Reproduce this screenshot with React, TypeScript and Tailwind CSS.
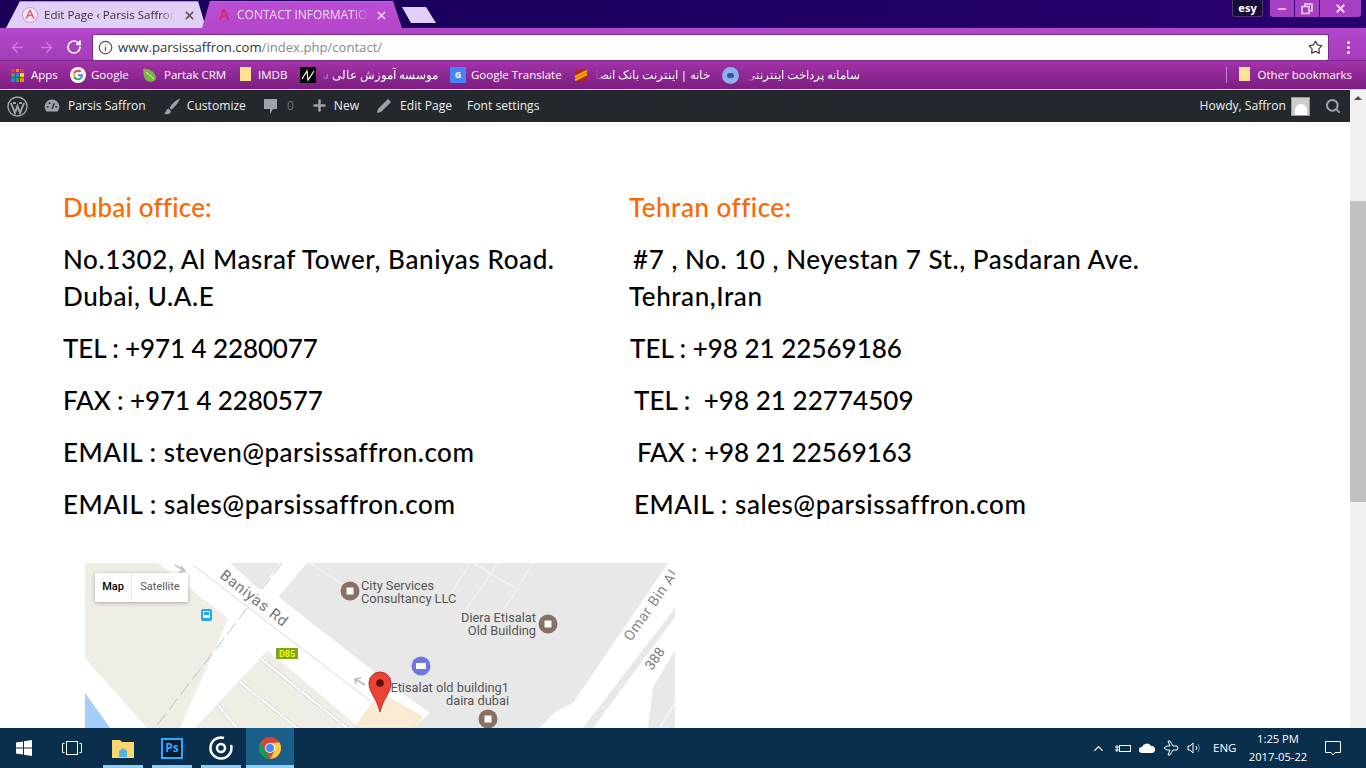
import React from "react";
import {
  ArrowLeft,
  ArrowRight,
  RotateCw,
  Info,
  Star,
  Plus,
  X,
  Minus,
  Search,
  ChevronUp,
} from "lucide-react";

const uiFont = "font-['Open_Sans',sans-serif]";

const BookmarkFolder = () => (
  <span className="w-[11px] h-[14px] bg-[#fde293] inline-block shrink-0" />
);

const Fav = () => (
  <svg width="16" height="16" viewBox="0 0 16 16">
    <circle cx="8" cy="8" r="7.5" fill="#f3e6f5" stroke="#cf9ac8" />
    <path d="M8 3 L4 12 M8 3 L12 12 M5 9 L11 8" stroke="#d5607a" strokeWidth="1.4" fill="none" />
  </svg>
);

const TabBar = () => (
  <div className="h-[28px] flex bg-gradient-to-r from-[#1c0058] via-[#1c0062] to-[#2a0070] shrink-0">
    <div className="mt-px ml-[6px] w-[200px] h-[27px] bg-[#e0d0f8] border-t border-[#a89ab8] [clip-path:polygon(14px_0,192px_0,200px_100%,0_100%)] flex items-center pl-[16px] gap-[6px] text-[11.5px] text-[#333] font-['Open_Sans',sans-serif]">
      <Fav />
      <span className="w-[130px] overflow-hidden whitespace-nowrap [mask-image:linear-gradient(to_right,black_90%,transparent)]">Edit Page ‹ Parsis Saffron</span>
      <X size={13} strokeWidth={3} className="text-[#555] ml-[3px]" />
    </div>
    <div className="mt-px -ml-[4px] w-[200px] h-[27px] bg-gradient-to-b from-[#b94fd6] to-[#b645c9] border-t border-[#9a80a8] [clip-path:polygon(8px_0,191px_0,200px_100%,0_100%)] flex items-center pl-[14px] gap-[5px] text-[12px] text-[#f4dcf8] font-['Open_Sans',sans-serif]">
      <svg width="16" height="16" viewBox="0 0 16 16">
        <path d="M8 2 L3.5 13 M8 2 L12.5 13 M4 10 L12 8" stroke="#e0245e" strokeWidth="1.8" fill="none" />
      </svg>
      <span className="w-[132px] overflow-hidden whitespace-nowrap [mask-image:linear-gradient(to_right,black_88%,transparent)]">CONTACT INFORMATION</span>
      <X size={13} strokeWidth={3} className="text-[#ecd0f2] ml-[1px]" />
    </div>
    <div className="mt-[7px] w-[34px] h-[16px] bg-[#e0d0f8] [clip-path:polygon(0_0,24px_0,34px_100%,9px_100%)]" />
    <div className="ml-auto flex h-[18px] items-start">
      <div className="w-[31px] h-[17px] mr-[7px] bg-[#180c3c] border border-[#4a3a6a] border-t-0 rounded-b-[3px] text-white text-[11px] font-bold flex items-center justify-center">
        esy
      </div>
      <div className="w-[24px] h-[17px] bg-[#a83ec4] rounded-bl-[3px] flex items-center justify-center mr-[1px]">
        <Minus size={12} strokeWidth={3} className="text-[#ecd8f2]" />
      </div>
      <div className="w-[24px] h-[17px] bg-[#a83ec4] flex items-center justify-center mr-[1px]">
        <svg width="12" height="12" viewBox="0 0 12 12" fill="none" stroke="#ecd8f2" strokeWidth="1.5">
          <rect x="1" y="3.5" width="7" height="7" />
          <path d="M4 3.5 V1 H11 V8 H8" />
        </svg>
      </div>
      <div className="w-[41px] h-[17px] mr-[5px] bg-[#a83ec4] rounded-br-[3px] flex items-center justify-center">
        <X size={13} strokeWidth={3.5} className="text-[#ecd8f2]" />
      </div>
    </div>
  </div>
);

const Toolbar = () => (
  <div className="h-[32px] pt-[6px] flex items-center shrink-0 bg-gradient-to-b from-[#b348cc] to-[#a63cb9]">
    <ArrowLeft size={17} strokeWidth={2} className="ml-[9px] text-[#c77cd8]" />
    <ArrowRight size={17} strokeWidth={2} className="ml-[12px] text-[#c77cd8]" />
    <RotateCw size={16} strokeWidth={2.6} className="ml-[11px] text-white" />
    <div className="ml-[10px] w-[1237px] h-[26px] bg-white rounded-[2px] border border-[#7a2a8a] border-b-0 flex items-center">
      <Info size={15} strokeWidth={2} className="ml-[5px] text-[#555]" />
      <span className={`ml-[5px] text-[13.1px] ${uiFont}`}>
        <span className="text-[#333]">www.parsissaffron.com</span>
        <span className="text-[#888]">/index.php/contact/</span>
      </span>
      <Star size={15} strokeWidth={2} className="ml-auto mr-[5px] text-[#444]" />
    </div>
    <div className="ml-[18px] flex flex-col gap-[2px]">
      <span className="w-[3px] h-[3px] bg-white rounded-full" />
      <span className="w-[3px] h-[3px] bg-white rounded-full" />
      <span className="w-[3px] h-[3px] bg-white rounded-full" />
    </div>
  </div>
);

const AppsIcon = () => (
  <span className="grid grid-cols-3 gap-[1px] w-[13px] h-[13px]">
    {["#e53935", "#fb8c00", "#e53935", "#43a047", "#1e88e5", "#fdd835", "#1e88e5", "#43a047", "#fb8c00"].map((c, i) => (
      <span key={i} style={{ backgroundColor: c }} />
    ))}
  </span>
);

const GoogleIcon = () => (
  <svg width="16" height="16" viewBox="0 0 48 48">
    <circle cx="24" cy="24" r="24" fill="#fff" />
    <path d="M39 25c0-1.3-.1-2.3-.3-3.3H24v6h8.5c-.4 2-1.5 3.6-3.2 4.7l5 3.9C37.3 33.5 39 29.7 39 25z" fill="#4285f4" />
    <path d="M24 40c4.2 0 7.7-1.4 10.3-3.7l-5-3.9c-1.4.9-3.2 1.5-5.3 1.5-4 0-7.5-2.7-8.7-6.4l-5.2 4C12.7 36.6 17.9 40 24 40z" fill="#34a853" />
    <path d="M15.3 27.5c-.7-2-.7-4.9 0-7l-5.2-4c-2.1 4.3-2.1 10.7 0 15z" fill="#fbbc05" />
    <path d="M24 14c2.3 0 4.3.8 5.9 2.3l4.4-4.4C31.7 9.4 28.2 8 24 8c-6.1 0-11.3 3.4-13.9 8.500l5.200 4C16.500 16.700 20 14 24 14z" fill="#ea4335" />
  </svg>
);

const BookmarkLabel = ({ children, className = "" }: { children: React.ReactNode; className?: string }) => (
  <span className={`text-[11.5px] text-white whitespace-nowrap shrink-0 ${className}`}>{children}</span>
);

const PersianLabel = ({ children, className = "" }: { children: React.ReactNode; className?: string }) => (
  <span
    dir="rtl"
    className={`text-[11.5px] text-white whitespace-nowrap shrink-0 overflow-hidden font-['Noto_Sans',sans-serif] [mask-image:linear-gradient(to_left,black_90%,transparent)] ${className}`}
  >
    {children}
  </span>
);

const BookmarksBar = () => (
  <div className={`h-[30px] flex items-center shrink-0 bg-gradient-to-b from-[#a334aa] to-[#7c1c80] border-t border-t-[#7d2a8e] border-b border-b-[#d8d0dc] ${uiFont}`}>
    <span className="ml-[11px]"><AppsIcon /></span>
    <BookmarkLabel className="ml-[7px] w-[27px]">Apps</BookmarkLabel>
    <span className="ml-[12px]"><GoogleIcon /></span>
    <BookmarkLabel className="ml-[5px] w-[39px]">Google</BookmarkLabel>
    <svg className="ml-[12px]" width="15" height="16" viewBox="0 0 15 16">
      <path d="M1 2 C8 1 14 6 14 12 C12 16 4 16 2 10 Z" fill="#7cb342" />
      <path d="M4 5 L12 12" stroke="#dcedc8" />
    </svg>
    <BookmarkLabel className="ml-[7px] w-[60px]">Partak CRM</BookmarkLabel>
    <span className="ml-[16px]"><BookmarkFolder /></span>
    <BookmarkLabel className="ml-[7px] w-[29px]">IMDB</BookmarkLabel>
    <span className="ml-[13px] w-[16px] h-[16px] bg-black flex items-center justify-center shrink-0">
      <svg width="14" height="14" viewBox="0 0 14 14" fill="none" stroke="#fff" strokeWidth="1.2">
        <path d="M1 11 L6 3 L7 12 L13 3" />
      </svg>
    </span>
    <PersianLabel className="ml-[6px] w-[116px]">موسسه آموزش عالی س</PersianLabel>
    <span className="ml-[12px] w-[16px] h-[16px] bg-[#4285f4] text-white text-[9px] font-bold flex items-center justify-center rounded-[1px] shrink-0">G</span>
    <BookmarkLabel className="ml-[5px] w-[89px]">Google Translate</BookmarkLabel>
    <svg className="ml-[14px]" width="14" height="14" viewBox="0 0 14 14">
      <rect x="1" y="1" width="12" height="12" rx="3" fill="#b5271f" />
      <path d="M1 9 L13 3 M1 12 L13 6" stroke="#f5b301" strokeWidth="2" />
    </svg>
    <PersianLabel className="ml-[7px] w-[115px]">خانه | اینترنت بانک انصا</PersianLabel>
    <span className="ml-[12px] w-[17px] h-[17px] rounded-full bg-[#8fb0e8] flex items-center justify-center shrink-0">
      <span className="w-[7px] h-[5px] rounded-full bg-[#3355aa]" />
    </span>
    <PersianLabel className="ml-[8px] w-[113px]">سامانه پرداخت اینترنتی</PersianLabel>
    <span className="ml-auto h-[16px] w-px bg-[#c27ccc]" />
    <span className="ml-[12px]"><BookmarkFolder /></span>
    <BookmarkLabel className="ml-[8px] mr-[14px]">Other bookmarks</BookmarkLabel>
  </div>
);

const WpItem = ({ icon, children, className = "" }: { icon?: React.ReactNode; children: React.ReactNode; className?: string }) => (
  <div className={`flex items-center ${className}`}>
    {icon}
    <span className="text-[12.1px] text-[#eeeeee] whitespace-nowrap">{children}</span>
  </div>
);

const AdminBar = () => (
  <div className={`h-[32px] bg-[#23282d] flex items-center shrink-0 pr-[9px] ${uiFont}`}>
    <svg className="ml-[7px]" width="21" height="21" viewBox="0 0 21 21" fill="none">
      <circle cx="10.5" cy="10.5" r="9.5" stroke="#9ea3a8" strokeWidth="1.5" />
      <path d="M4 7 L8 17 L10.5 10 L13 17 L17 7 M6 7 H9 M12 7 H15" stroke="#9ea3a8" strokeWidth="2" />
    </svg>
    <WpItem
      className="ml-[16px]"
      icon={
        <svg className="mr-[8px]" width="16" height="15" viewBox="0 0 17 15">
          <path d="M8.5 1 A8 8 0 0 0 2.5 14 H14.5 A8 8 0 0 0 8.5 1 Z" fill="#9ea3a8" />
          <path d="M8.5 11 L11 5" stroke="#23282d" strokeWidth="1.5" />
          <circle cx="4" cy="9" r="1" fill="#23282d" />
          <circle cx="6" cy="5" r="1" fill="#23282d" />
          <circle cx="13" cy="9" r="1" fill="#23282d" />
        </svg>
      }
    >
      Parsis Saffron
    </WpItem>
    <WpItem
      className="ml-[17px]"
      icon={
        <svg className="mr-[6px]" width="18" height="19" viewBox="0 0 19 19">
          <path d="M18 1 C13 3 9 7 7 11 L9 13 C12 10 16 6 18 1 Z M6 12 C3 12 4 16 1 17 C5 19 9 17 8 14 Z" fill="#9ea3a8" />
        </svg>
      }
    >
      Customize
    </WpItem>
    <svg className="ml-[17px]" width="15" height="17" viewBox="0 0 15 17">
      <path d="M1 1 H14 V11 H10 L7 16 V11 H1 Z" fill="#9ea3a8" />
    </svg>
    <span className="ml-[9px] text-[12.1px] text-[#777]">0</span>
    <WpItem className="ml-[17px]" icon={<Plus size={17} strokeWidth={3.5} className="mr-[6px] text-[#9ea3a8]" />}>
      New
    </WpItem>
    <WpItem
      className="ml-[17px]"
      icon={
        <svg className="mr-[8px]" width="16" height="16" viewBox="0 0 16 16">
          <path d="M12 1 L15 4 L5 14 L1 15 L2 11 Z" fill="#9ea3a8" />
        </svg>
      }
    >
      Edit Page
    </WpItem>
    <WpItem className="ml-[15px]">Font settings</WpItem>
    <WpItem className="ml-auto">Howdy, Saffron</WpItem>
    <span className="ml-[5px] w-[19px] h-[19px] bg-[#ccc] border border-[#999] flex items-end justify-center overflow-hidden">
      <span className="w-[12px] h-[11px] bg-white rounded-t-full" />
    </span>
    <Search size={16} strokeWidth={3} className="ml-[15px] text-[#9ea3a8]" />
  </div>
);

const OfficeLine = ({ children, className = "" }: { children: React.ReactNode; className?: string }) => (
  <p className={`mb-[15px] leading-[37px] whitespace-pre-wrap ${className}`}>{children}</p>
);

const Offices = () => (
  <div className="grid grid-cols-[566px_1fr] pl-[63px] text-[26px] tracking-[0.55px] text-black font-['Lato',sans-serif] font-medium pt-[67px]">
    <div>
      <OfficeLine className="text-[#ff6600] tracking-[0.2px]">Dubai office:</OfficeLine>
      <OfficeLine className="tracking-[0.6px]">
        No.1302, Al Masraf Tower, Baniyas Road.
        <br />
        Dubai, U.A.E
      </OfficeLine>
      <OfficeLine className="tracking-[-0.1px]">TEL : +971 4 2280077</OfficeLine>
      <OfficeLine className="tracking-[-0.1px]">FAX : +971 4 2280577</OfficeLine>
      <OfficeLine className="tracking-[0.5px]">EMAIL : steven@parsissaffron.com</OfficeLine>
      <OfficeLine>EMAIL : sales@parsissaffron.com</OfficeLine>
    </div>
    <div>
      <OfficeLine className="text-[#ff6600] tracking-[0.5px]">Tehran office:</OfficeLine>
      <OfficeLine>
        <span className="pl-[4px]">#7 , No. 10 , Neyestan 7 St., Pasdaran Ave.</span>
        <br />
        Tehran,Iran
      </OfficeLine>
      <OfficeLine className="pl-px tracking-[0px]">TEL : +98 21 22569186</OfficeLine>
      <OfficeLine className="pl-[5px] tracking-[0.05px]">TEL :  +98 21 22774509</OfficeLine>
      <OfficeLine className="pl-[8px] tracking-[-0.1px]">FAX : +98 21 22569163</OfficeLine>
      <OfficeLine className="pl-[5px]">EMAIL : sales@parsissaffron.com</OfficeLine>
    </div>
  </div>
);

const Poi = ({ x, y }: { x: number; y: number }) => (
  <g>
    <circle cx={x} cy={y} r="9.5" fill="#8a6f64" />
    <rect x={x - 3.5} y={y - 3.5} width="7" height="7" fill="#fff" />
  </g>
);

const MapFrame = () => (
  <div className="relative ml-[85px] mt-[25px] w-[590px] h-[165px] overflow-hidden shrink-0">
    <svg width="590" height="165" viewBox="0 0 590 165" className="block font-['Roboto',sans-serif]">
      <rect width="590" height="165" fill="#e8e8e8" />
      {/* beige blocks */}
      <polygon points="0,0 73,0 170,77 95,165 62,165 0,95" fill="#f0ede4" />
      <polygon points="183,87 290,165 110,165" fill="#f0ede4" />
      {/* baniyas road */}
      <polygon points="73,0 150,0 310,125 345,150 328,165 275,165 170,77" fill="#fff" />
      <polygon points="170,77 195,32 222,0 190,0 150,40 95,165 110,165 183,87" fill="#fff" />
      <polygon points="145,0 195,0 175,27" fill="#e8e8e8" />
      <polygon points="0,95 62,165 25,165 0,130" fill="#fff" />
      <polygon points="0,130 25,165 0,165" fill="#a3ccff" />
      <line x1="108" y1="2" x2="285" y2="138" stroke="#e6e6e6" strokeWidth="1.5" />
      <polygon points="270,165 295,130 337,154 328,165" fill="#faebd2" stroke="#f2dcb8" />
      {/* omar bin al road */}
      <polygon points="583,0 488,140 470,149 455,165 498,165 590,45 590,0" fill="#fff" />
      <polygon points="590,54 508,165 563,165 568,124 590,87" fill="#fff" />
      <line x1="590" y1="140" x2="575" y2="164" stroke="#f6f6f6" strokeWidth="2" />
      {/* small roads */}
      {["175,95 262,165", "155,119 212,165", "133,142 152,165"].map((p) => (
        <g key={p}>
          <polyline points={p} stroke="#dcdcdc" strokeWidth="4" fill="none" />
          <polyline points={p} stroke="#fff" strokeWidth="2" fill="none" />
        </g>
      ))}
      {["385,0 367,29", "413,0 375,55", "448,0 420,45", "388,0 430,25", "225,0 288,42"].map((p) => (
        <polyline key={p} points={p} stroke="#f3f3f3" strokeWidth="1.5" fill="none" />
      ))}
      <line x1="197" y1="0" x2="70" y2="165" stroke="#bdbdc4" strokeWidth="1" strokeDasharray="14 5" />
      <path d="M90 2 L100 8 M96 3 L100 8 L94 9" stroke="#c0c0d0" strokeWidth="1.5" fill="none" />
      <path d="M270 116 L280 122 M271 121 L270 116 L276 115" stroke="#b8b8b8" strokeWidth="1.5" fill="none" />
      {/* labels */}
      <text x="134" y="14" fontSize="15" fill="#777" transform="rotate(38 134 14)" letterSpacing="0.8">Baniyas Rd</text>
      <text x="546" y="79" fontSize="14.5" fill="#888" transform="rotate(-55 546 79)" letterSpacing="0.6">Omar Bin Al</text>
      <text x="567" y="108" fontSize="14" fill="#777" transform="rotate(-55 567 108)">388</text>
      <text x="276" y="27" fontSize="12.8" fill="#555">City Services</text>
      <text x="276" y="40" fontSize="12.8" fill="#555">Consultancy LLC</text>
      <text x="451" y="59" fontSize="12.8" fill="#555" textAnchor="end">Diera Etisalat</text>
      <text x="451" y="72" fontSize="12.8" fill="#555" textAnchor="end">Old Building</text>
      <text x="424" y="129" fontSize="12.8" fill="#555" textAnchor="end">Etisalat old building1</text>
      <text x="424" y="142" fontSize="12.8" fill="#555" textAnchor="end">daira dubai</text>
      <Poi x={265} y={28} />
      <Poi x={463} y={61} />
      <Poi x={403} y={156} />
      <circle cx="336" cy="103" r="9.5" fill="#6e78e0" />
      <rect x="331" y="100" width="10" height="6" fill="#fff" />
      {/* bus stop */}
      <rect x="116" y="46" width="11" height="12" rx="2" fill="#1eaaf1" />
      <rect x="118" y="48" width="7" height="7" rx="1" fill="#fff" />
      <rect x="119" y="49" width="5" height="3" fill="#1eaaf1" />
      {/* highway shield */}
      <rect x="191" y="85" width="22" height="11" fill="#7ba428" />
      <text x="202" y="94" fontSize="9" fontWeight="700" fill="#f7f700" textAnchor="middle">D85</text>
      {/* marker */}
      <path d="M295 149 C292 135 284 130 284 120 A11 11 0 0 1 306 120 C306 130 298 135 295 149 Z" fill="#ea4335" stroke="#b8322a" />
      <circle cx="295" cy="120" r="3.8" fill="#5c1010" />
    </svg>
    <div className="absolute left-[10px] top-[10px] h-[29px] flex bg-white rounded-[2px] shadow-[0_1px_4px_rgba(0,0,0,0.3)] text-[11px] font-['Roboto',sans-serif]">
      <span className="w-[37px] flex items-center justify-center text-black font-medium border-r border-[#e6e6e6]">Map</span>
      <span className="w-[56px] flex items-center justify-center text-[#565656]">Satellite</span>
    </div>
  </div>
);

const Scrollbar = () => (
  <div className="w-[16px] bg-[#f1f1f1] flex flex-col items-center shrink-0">
    <span className="mt-[6px] w-0 h-0 border-x-[4px] border-x-transparent border-b-[4px] border-b-[#505050]" />
    <span className="mt-[101px] w-[16px] h-[301px] bg-[#c1c1c1]" />
  </div>
);

const Taskbar = () => (
  <div className={`h-[40px] bg-[#0a2f4d] flex items-stretch shrink-0 text-white ${uiFont}`}>
    <div className="w-[48px] flex items-center justify-center">
      <svg width="16" height="16" viewBox="0 0 16 16" fill="#fff">
        <path d="M0 2.5 L7 1.5 V7.5 H0 Z M8 1.3 L16 0 V7.5 H8 Z M0 8.5 H7 V14.5 L0 13.5 Z M8 8.5 H16 V16 L8 14.7 Z" />
      </svg>
    </div>
    <div className="w-[48px] flex items-center justify-center">
      <svg width="20" height="14" viewBox="0 0 20 14" fill="none" stroke="#fff">
        <rect x="4.5" y="0.5" width="11" height="13" />
        <path d="M2.5 2.5 H0.5 V11.5 H2.5 M17.5 2.5 H19.5 V11.5 H17.5" />
      </svg>
    </div>
    <div className="w-[40px] ml-[7px] flex items-center justify-center border-b-[3px] border-[#90cdf4] pt-[3px]">
      <svg width="22" height="19" viewBox="0 0 22 19">
        <path d="M0 1 H8 L10 3 H22 V19 H0 Z" fill="#fcd671" />
        <path d="M7 18 V12 L11 9 L15 12 V18 Z" fill="#4eb3e8" />
      </svg>
    </div>
    <div className="w-[40px] ml-[9px] flex items-center justify-center border-b-[3px] border-[#90cdf4] pt-[3px]">
      <span className="w-[22px] h-[21px] bg-[#061e33] border-2 border-[#31a8ff] text-[#31a8ff] text-[12px] font-bold flex items-center justify-center">
        Ps
      </span>
    </div>
    <div className="w-[40px] ml-[9px] flex items-center justify-center border-b-[3px] border-[#90cdf4] pt-[3px]">
      <svg width="24" height="24" viewBox="0 0 24 24" fill="none" stroke="#fff">
        <path d="M15 2 A10.5 10.5 0 1 0 22 9" strokeWidth="2.5" />
        <circle cx="12" cy="12" r="4" strokeWidth="2.5" />
      </svg>
    </div>
    <div className="w-[48px] ml-[5px] bg-[#1a5f8a] flex items-center justify-center border-b-[3px] border-[#90cdf4] pt-[3px]">
      <svg width="22" height="22" viewBox="0 0 22 22">
        <circle cx="11" cy="11" r="11" fill="#db4437" />
        <path d="M11 22 A11 11 0 0 1 1.5 5.5 L6.5 14 Z" fill="#0f9d58" />
        <path d="M11 22 A11 11 0 0 0 20.5 5.5 L11 6 L15.5 14 Z" fill="#ffcd40" />
        <circle cx="11" cy="11" r="5" fill="#fff" />
        <circle cx="11" cy="11" r="4" fill="#4285f4" />
      </svg>
    </div>
    <div className="ml-auto flex items-center">
      <ChevronUp size={15} className="mr-[9px]" />
      <svg className="mr-[8px]" width="16" height="10" viewBox="0 0 16 10" fill="none" stroke="#fff">
        <rect x="4.5" y="2.5" width="11" height="6" />
        <path d="M0 4 H4 M0 7 H4 M2 2 V9" />
      </svg>
      <svg className="mr-[8px]" width="16" height="10" viewBox="0 0 16 10" fill="#fff">
        <path d="M3 10 A3 3 0 0 1 3 4 A5 5 0 0 1 12 3 A3.5 3.5 0 0 1 13 10 Z" />
      </svg>
      <svg className="mr-[8px]" width="16" height="16" viewBox="0 0 16 16" fill="none" stroke="#fff">
        <path d="M1 8 L4 6 H7 L5 1 H7 L10 6 H14 Q16 8 14 10 H10 L7 15 H5 L7 10 H4 Z" />
      </svg>
      <svg className="mr-[10px]" width="16" height="14" viewBox="0 0 16 14" fill="none" stroke="#fff">
        <path d="M1 5 H3 L6 2 V12 L3 9 H1 Z" />
        <path d="M9 5 Q10.5 7 9 9" />
        <path d="M11 3 Q14 7 11 11" stroke="#7a93a6" />
      </svg>
      <span className="text-[11.5px] w-[23px] mr-[13px]">ENG</span>
      <div className="w-[58px] flex flex-col items-center text-[11.2px] leading-[18px] whitespace-nowrap">
        <span>1:25 PM</span>
        <span>2017-05-22</span>
      </div>
      <svg className="ml-[18px] mr-[25px]" width="16" height="16" viewBox="0 0 16 16" fill="none" stroke="#fff">
        <path d="M0.5 1.5 H15.5 V12.5 H10 L8 15 L6 12.5 H0.5 Z" />
      </svg>
    </div>
  </div>
);

export default function App() {
  return (
    <div className="w-[1366px] h-[768px] flex flex-col overflow-hidden bg-white">
      <TabBar />
      <Toolbar />
      <BookmarksBar />
      <div className="flex-1 flex min-h-0">
        <div className="flex-1 min-w-0 overflow-hidden flex flex-col">
          <AdminBar />
          <Offices />
          <MapFrame />
        </div>
        <Scrollbar />
      </div>
      <Taskbar />
    </div>
  );
}
